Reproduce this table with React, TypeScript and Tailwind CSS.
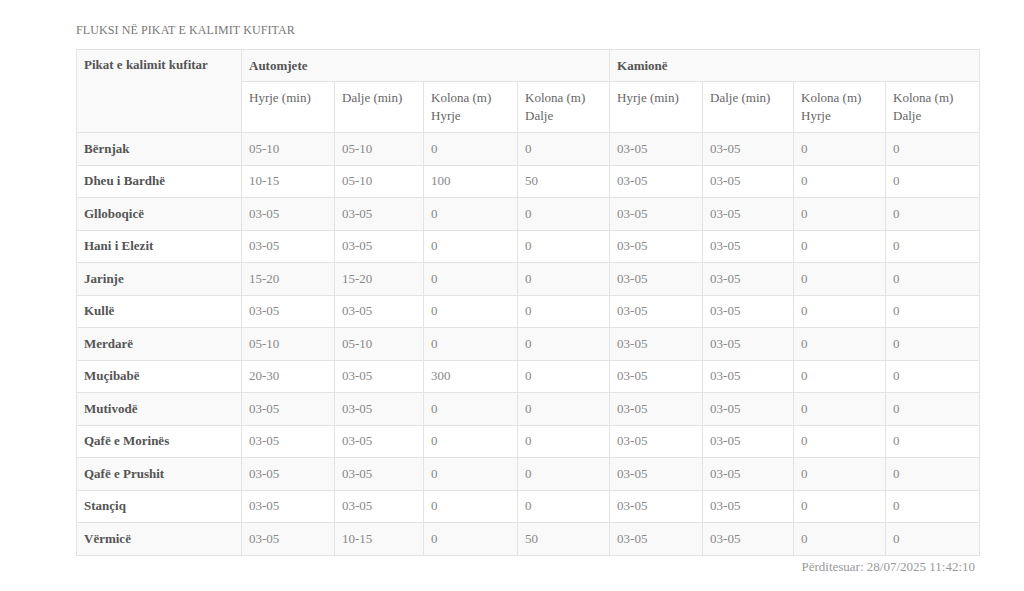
const rows: Array<[string, string, string, string, string, string, string, string, string]> = [
  ["Bërnjak", "05-10", "05-10", "0", "0", "03-05", "03-05", "0", "0"],
  ["Dheu i Bardhë", "10-15", "05-10", "100", "50", "03-05", "03-05", "0", "0"],
  ["Glloboqicë", "03-05", "03-05", "0", "0", "03-05", "03-05", "0", "0"],
  ["Hani i Elezit", "03-05", "03-05", "0", "0", "03-05", "03-05", "0", "0"],
  ["Jarinje", "15-20", "15-20", "0", "0", "03-05", "03-05", "0", "0"],
  ["Kullë", "03-05", "03-05", "0", "0", "03-05", "03-05", "0", "0"],
  ["Merdarë", "05-10", "05-10", "0", "0", "03-05", "03-05", "0", "0"],
  ["Muçibabë", "20-30", "03-05", "300", "0", "03-05", "03-05", "0", "0"],
  ["Mutivodë", "03-05", "03-05", "0", "0", "03-05", "03-05", "0", "0"],
  ["Qafë e Morinës", "03-05", "03-05", "0", "0", "03-05", "03-05", "0", "0"],
  ["Qafë e Prushit", "03-05", "03-05", "0", "0", "03-05", "03-05", "0", "0"],
  ["Stançiq", "03-05", "03-05", "0", "0", "03-05", "03-05", "0", "0"],
  ["Vërmicë", "03-05", "10-15", "0", "50", "03-05", "03-05", "0", "0"],
];

const subHeads = [
  ["Hyrje (min)"],
  ["Dalje (min)"],
  ["Kolona (m)", "Hyrje"],
  ["Kolona (m)", "Dalje"],
  ["Hyrje (min)"],
  ["Dalje (min)"],
  ["Kolona (m)", "Hyrje"],
  ["Kolona (m)", "Dalje"],
];

const colWidths = ["w-[165px]", "w-[93px]", "w-[89px]", "w-[94px]", "w-[92px]", "w-[93px]", "w-[91px]", "w-[92px]", "w-[94px]"];

export default function App() {
  return (
    <div className="min-h-[591px] bg-white font-['Liberation_Serif','DejaVu_Serif',serif] text-[13px]">
      <div className="ml-[76px] w-[903px] pt-[22px]">
        <h3 className="text-[12px] uppercase text-[#777] tracking-[0.1px] leading-[16px] mb-[11px]">
          Fluksi në pikat e kalimit kufitar
        </h3>

        <table className="w-full table-fixed border-collapse border border-[#e3e3e3]">
          <colgroup>
            {colWidths.map((w, i) => (
              <col key={i} className={w} />
            ))}
          </colgroup>
          <thead>
            <tr className="bg-[#f9f9f9] h-[32px]">
              <th rowSpan={2} className="border border-[#e3e3e3] align-top text-left font-bold text-[#555] px-[7px] pt-[7px] leading-[16px]">
                Pikat e kalimit kufitar
              </th>
              <th colSpan={4} className="border border-[#e3e3e3] text-left font-bold text-[#555] px-[7px] leading-[16px]">
                Automjete
              </th>
              <th colSpan={4} className="border border-[#e3e3e3] text-left font-bold text-[#555] px-[7px] leading-[16px]">
                Kamionë
              </th>
            </tr>
            <tr className="h-[51px]">
              {subHeads.map((lines, i) => (
                <th key={i} className="bg-white border border-[#e3e3e3] align-top text-left font-normal text-[#666] px-[7px] pt-[7px] leading-[18px]">
                  {lines.map((l, j) => (
                    <div key={j}>{l}</div>
                  ))}
                </th>
              ))}
            </tr>
          </thead>
          <tbody>
            {rows.map((r, i) => (
              <tr key={i} className={i % 2 === 0 ? "bg-[#f9f9f9] h-[32.5px]" : "bg-white h-[32.5px]"}>
                {r.map((c, j) => (
                  <td
                    key={j}
                    className={
                      j === 0
                        ? "border border-[#e3e3e3] px-[7px] font-bold text-[#555] leading-[16px]"
                        : "border border-[#e3e3e3] px-[7px] text-[#888] leading-[16px]"
                    }
                  >
                    {c}
                  </td>
                ))}
              </tr>
            ))}
          </tbody>
        </table>

        <p className="text-right text-[13px] text-[#999] pr-[4px] mt-[3px] leading-[16px]">
          Përditesuar: 28/07/2025 11:42:10
        </p>
      </div>
    </div>
  );
}
